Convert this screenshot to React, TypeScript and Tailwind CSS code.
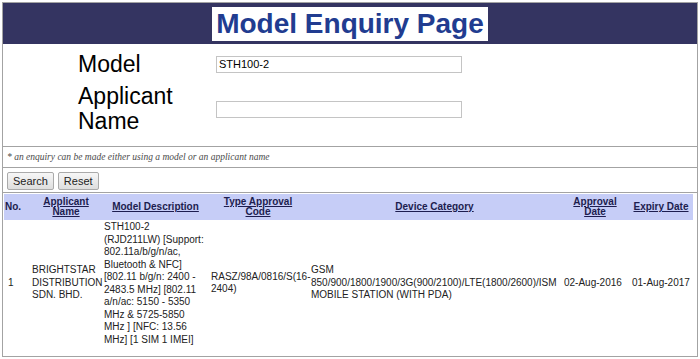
import React from "react";

const sans = { fontFamily: '"Liberation Sans", Arial, sans-serif' };

const modelLines = [
  "STH100-2",
  "(RJD211LW) [Support:",
  "802.11a/b/g/n/ac,",
  "Bluetooth & NFC]",
  "[802.11 b/g/n: 2400 -",
  "2483.5 MHz] [802.11",
  "a/n/ac: 5150 - 5350",
  "MHz & 5725-5850",
  "MHz ] [NFC: 13.56",
  "MHz] [1 SIM 1 IMEI]",
];

function Lines({ items }: { items: string[] }) {
  return (
    <>
      {items.map((l, i) => (
        <div key={i} className="whitespace-nowrap">
          {l}
        </div>
      ))}
    </>
  );
}

function Th({ children, left }: { children: React.ReactNode; left?: boolean }) {
  return (
    <th
      className={
        "px-[1px] align-middle font-bold text-[10px] leading-[10px] text-[#1d1d4f] " +
        (left ? "text-left" : "text-center underline")
      }
    >
      {children}
    </th>
  );
}

export default function App() {
  return (
    <div className="bg-white w-[700px] h-[359px] pt-[2px] pl-[2px]" style={sans}>
      <div className="w-[696px] h-[355px] border border-[#a3a3a3] flex flex-col">
        {/* title bar */}
        <div className="h-[41px] bg-[#343461] flex items-center justify-center shrink-0">
          <h1 className="bg-white px-[4px] text-[28px] leading-[34px] font-bold text-[#213c90]">
            Model Enquiry Page
          </h1>
        </div>

        {/* form */}
        <div className="h-[103px] border-b border-[#a3a3a3] pt-[8px] pl-[75px] shrink-0">
          <div className="grid grid-cols-[138px_246px] gap-y-[7px] items-center text-[23px] leading-[25px] text-black">
            <div>Model</div>
            <input
              defaultValue="STH100-2"
              className="h-[17px] w-[246px] border border-[#c4c4c4] px-[2px] text-[11px] text-black outline-none"
            />
            <div>
              Applicant
              <br />
              Name
            </div>
            <input className="h-[17px] w-[246px] border border-[#c4c4c4] px-[2px] text-[11px] outline-none" />
          </div>
        </div>

        {/* note */}
        <div className="h-[21px] border-b border-[#a3a3a3] flex items-center pl-[4px] shrink-0">
          <span
            className="italic text-[9.5px] text-[#4a4a4a]"
            style={{ fontFamily: '"Liberation Serif", "Times New Roman", serif' }}
          >
            * an enquiry can be made either using a model or an applicant name
          </span>
        </div>

        {/* buttons */}
        <div className="h-[25px] border-b border-[#a3a3a3] flex items-center gap-[4px] pl-[4px] pt-[1px] shrink-0">
          <button className="h-[18px] px-[5px] text-[11px] leading-[16px] text-[#222] border border-[#aaaaaa] rounded-[2px] bg-gradient-to-b from-[#f7f7f7] to-[#dedede]">
            Search
          </button>
          <button className="h-[18px] px-[5px] text-[11px] leading-[16px] text-[#222] border border-[#aaaaaa] rounded-[2px] bg-gradient-to-b from-[#f7f7f7] to-[#dedede]">
            Reset
          </button>
        </div>

        {/* results */}
        <div className="pt-[1px] pl-[1px]">
          <table className="table-fixed w-[689px] border-collapse text-[10px] text-[#222]">
            <colgroup>
              <col className="w-[25px]" />
              <col className="w-[74px]" />
              <col className="w-[105px]" />
              <col className="w-[100px]" />
              <col className="w-[253px]" />
              <col className="w-[68px]" />
              <col className="w-[64px]" />
            </colgroup>
            <thead>
              <tr className="h-[26px] bg-[#c6cdf7]">
                <Th left>No.</Th>
                <Th>
                  Applicant
                  <br />
                  Name
                </Th>
                <Th>Model Description</Th>
                <Th>
                  Type Approval
                  <br />
                  Code
                </Th>
                <Th>Device Category</Th>
                <Th>
                  Approval
                  <br />
                  Date
                </Th>
                <Th>Expiry Date</Th>
              </tr>
            </thead>
            <tbody className="leading-[12.5px]">
              <tr>
                <td className="pl-[4px] align-middle">1</td>
                <td className="pl-[3px] align-middle">
                  <Lines items={["BRIGHTSTAR", "DISTRIBUTION", "SDN. BHD."]} />
                </td>
                <td className="pl-[1px] align-middle pt-[1px]">
                  <Lines items={modelLines} />
                </td>
                <td className="pl-[3px] align-middle">
                  <Lines items={["RASZ/98A/0816/S(16-", "2404)"]} />
                </td>
                <td className="pl-[3px] align-middle">
                  <Lines
                    items={[
                      "GSM",
                      "850/900/1800/1900/3G(900/2100)/LTE(1800/2600)/ISM",
                      "MOBILE STATION (WITH PDA)",
                    ]}
                  />
                </td>
                <td className="pl-[3px] align-middle whitespace-nowrap">02-Aug-2016</td>
                <td className="pl-[3px] align-middle whitespace-nowrap">01-Aug-2017</td>
              </tr>
            </tbody>
          </table>
        </div>
      </div>
    </div>
  );
}
